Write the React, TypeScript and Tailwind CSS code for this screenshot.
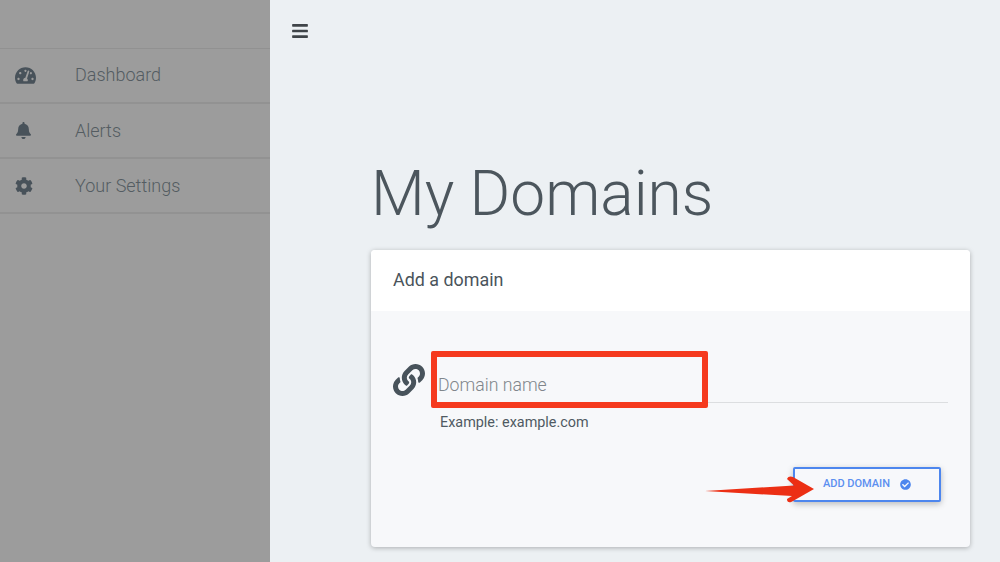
import { FaBars, FaBell, FaCheckCircle, FaCog, FaLink, FaTachometerAlt } from "react-icons/fa";

const items = [
  { label: "Dashboard", Icon: FaTachometerAlt, size: 21, ml: "ml-[15px] w-[60px]", text: "-mt-[2px]" },
  { label: "Alerts", Icon: FaBell, size: 17, ml: "ml-[15px] w-[60px]", text: "" },
  { label: "Your Settings", Icon: FaCog, size: 18, ml: "ml-[15px] w-[60px]", text: "" },
];

export default function App() {
  return (
    <div className="relative flex h-[562px] w-[1000px] overflow-hidden bg-[#ecf0f3] font-['Roboto',sans-serif] text-[#4f5a62]">
      <aside className="h-full w-[270px] shrink-0 bg-[#9c9c9c] pt-[48px]">
        <nav className="border-t border-[#919191]">
          {items.map(({ label, Icon, size, ml, text }) => (
            <div key={label} className="flex h-[55px] items-center border-b-2 border-[#929292] text-[18px] font-light text-[#545c62]">
              <div className={`${ml} flex shrink-0 items-center`}>
                <Icon size={size} className="text-[#48525a]" />
              </div>
              <span className={text}>{label}</span>
            </div>
          ))}
        </nav>
      </aside>
      <main className="min-w-0 flex-1">
        <div className="pl-[21px] pt-[22px]">
          <FaBars size={18} className="text-[#3f4448]" />
        </div>
        <div className="pl-[101px] pr-[30px] pt-[117px]">
          <h1 className="text-[62.2px] font-light leading-[73px] text-[#4c565d]">My Domains</h1>
          <section className="mt-[20px] h-[297px] overflow-hidden rounded bg-[#f7f8fa] shadow-[0_1px_5px_rgba(0,0,0,0.28)]">
            <header className="flex h-[61px] items-center bg-white px-[22px] text-[17.9px] text-[#4a545b]">Add a domain</header>
            <div className="relative px-[22px] pt-[53px]">
              <div className="flex">
                <FaLink size={32} className="shrink-0 text-[#48535b]" />
                <div className="ml-[13px] min-w-0 flex-1">
                  <div className="flex h-[39px] items-end border-b border-[#dcdee0] pb-[3px] pl-0 text-[17.7px] font-light text-[#80868b]">Domain name</div>
                  <p className="mt-[9px] pl-[2px] text-[14.4px] text-[#4f5a62]">Example: example.com</p>
                </div>
              </div>
              <div className="mr-[7px] mt-[33px] flex justify-end">
                <button className="flex h-[35px] w-[148px] items-center justify-center gap-[10px] rounded-[2px] border-2 border-[#4d86ee] bg-[#f7f8fb] text-[11px] font-medium text-[#5c8ff0] shadow-[0_2px_6px_rgba(0,0,0,0.25)]">
                  ADD DOMAIN
                  <FaCheckCircle size={11} className="text-[#4d86ee]" />
                </button>
              </div>
            </div>
          </section>
        </div>
      </main>
      <div className="absolute left-[431px] top-[351px] h-[57px] w-[277px] rounded-[2px] border-[6px] border-[#f53a1e]" />
      <svg className="absolute left-[700px] top-[470px]" width="120" height="40" viewBox="0 0 120 40">
        <path d="M5 21 L94 15.5 L87 9 C88 6 91 6 93 7 L114 19 L93 31 C90 33 87 33 87 29 L92 26 Z" fill="#ec2f14" />
      </svg>
    </div>
  );
}
